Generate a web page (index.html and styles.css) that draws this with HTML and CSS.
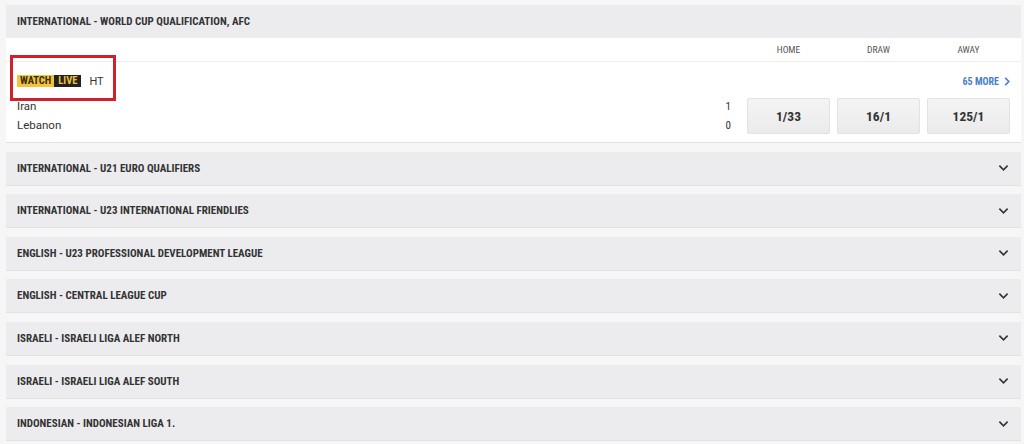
FILE: index.html
```html
<!DOCTYPE html>
<html>
<head>
    <title>Football coupon</title>
    <link rel="stylesheet" href="styles.css">
</head>
<body>
    <div class="coupon">
        <!-- Open competition with live match -->
        <div class="league open">
            <div class="league-head">INTERNATIONAL - WORLD CUP QUALIFICATION, AFC</div>
            <div class="league-body">
                <div class="market-head">
                    <span class="col">HOME</span>
                    <span class="col">DRAW</span>
                    <span class="col">AWAY</span>
                </div>
                <div class="event">
                    <div class="event-top">
                        <div class="status">
                            <span class="watch">WATCH</span><span class="live">LIVE</span>
                            <span class="period">HT</span>
                        </div>
                        <a class="more">65 MORE <svg class="more-arrow" viewBox="0 0 6 10"><path d="M1 1 L5 5 L1 9"/></svg></a>
                    </div>
                    <div class="event-main">
                        <div class="teams">
                            <div>Iran</div>
                            <div>Lebanon</div>
                        </div>
                        <div class="scores">
                            <div>1</div>
                            <div>0</div>
                        </div>
                        <div class="odds">
                            <button class="price">1/33</button>
                            <button class="price">16/1</button>
                            <button class="price">125/1</button>
                        </div>
                    </div>
                </div>
                <div class="highlight"></div>
            </div>
        </div>

        <!-- Collapsed competitions -->
        <div class="league"><div class="league-head">INTERNATIONAL - U21 EURO QUALIFIERS<svg class="chev" viewBox="0 0 12 8"><path d="M1.5 1.5 L6 6 L10.5 1.5"/></svg></div></div>
        <div class="league"><div class="league-head">INTERNATIONAL - U23 INTERNATIONAL FRIENDLIES<svg class="chev" viewBox="0 0 12 8"><path d="M1.5 1.5 L6 6 L10.5 1.5"/></svg></div></div>
        <div class="league"><div class="league-head">ENGLISH - U23 PROFESSIONAL DEVELOPMENT LEAGUE<svg class="chev" viewBox="0 0 12 8"><path d="M1.5 1.5 L6 6 L10.5 1.5"/></svg></div></div>
        <div class="league"><div class="league-head">ENGLISH - CENTRAL LEAGUE CUP<svg class="chev" viewBox="0 0 12 8"><path d="M1.5 1.5 L6 6 L10.5 1.5"/></svg></div></div>
        <div class="league"><div class="league-head">ISRAELI - ISRAELI LIGA ALEF NORTH<svg class="chev" viewBox="0 0 12 8"><path d="M1.5 1.5 L6 6 L10.5 1.5"/></svg></div></div>
        <div class="league"><div class="league-head">ISRAELI - ISRAELI LIGA ALEF SOUTH<svg class="chev" viewBox="0 0 12 8"><path d="M1.5 1.5 L6 6 L10.5 1.5"/></svg></div></div>
        <div class="league"><div class="league-head">INDONESIAN - INDONESIAN LIGA 1.<svg class="chev" viewBox="0 0 12 8"><path d="M1.5 1.5 L6 6 L10.5 1.5"/></svg></div></div>
    </div>
</body>
</html>
```
FILE: styles.css
```css
/* Page */
body {
    margin: 0;
    background-color: #f6f6f7;
    font-family: "Roboto Condensed", "Liberation Sans Narrow", "DejaVu Sans Condensed", Roboto, sans-serif;
    color: #333;
}

.coupon {
    display: flex;
    flex-direction: column;
    gap: 8.6px;
    padding: 5px 3px 0 6px;
}

/* League blocks */
.league {
    border-bottom: 1px solid #e2e2e4;
}

.league-head {
    display: flex;
    align-items: center;
    justify-content: space-between;
    height: 33px;
    padding: 0 12px 0 11px;
    background-color: #ececef;
    font-size: 11px;
    font-weight: bold;
    color: #333;
}

.chev {
    width: 11px;
    height: 8px;
    fill: none;
    stroke: #333;
    stroke-width: 1.8;
}

.league-body {
    position: relative;
    background-color: #fff;
    height: 104px;
}

/* HOME / DRAW / AWAY */
.market-head {
    display: flex;
    justify-content: flex-end;
    gap: 7px;
    height: 23px;
    padding: 0 11px;
    border-bottom: 1px solid #eeeeee;
    font-size: 9.5px;
    color: #555;
}

.market-head .col {
    width: 83px;
    text-align: center;
    line-height: 23px;
}

/* Event row */
.event {
    padding: 12px 11px 0 11px;
}

.event-top {
    display: flex;
    justify-content: space-between;
    align-items: center;
    height: 14px;
}

.status {
    display: flex;
    align-items: center;
    font-size: 10.5px;
    font-weight: bold;
}

.watch {
    background-color: #f3c33e;
    color: #3a2e0a;
    padding: 0 3px 0 3px;
    line-height: 12px;
}

.live {
    background-color: #23221f;
    color: #f3c33e;
    padding: 0 4px;
    line-height: 12px;
}

.period {
    margin-left: 8px;
    font-family: Roboto, sans-serif;
    font-size: 11px;
    font-weight: normal;
    color: #333;
}

.more {
    display: flex;
    align-items: center;
    gap: 5px;
    font-size: 10px;
    font-weight: bold;
    color: #4c7fc4;
    cursor: pointer;
}

.more-arrow {
    width: 6px;
    height: 9px;
    fill: none;
    stroke: #4c7fc4;
    stroke-width: 1.8;
}

.event-main {
    display: flex;
    align-items: center;
    margin-top: 9px;
}

.teams {
    flex: 1;
    font-family: Roboto, sans-serif;
    font-size: 11.5px;
    line-height: 19px;
    color: #333;
}

.scores {
    width: 20px;
    margin-right: 16px;
    text-align: right;
    font-size: 11px;
    line-height: 19px;
}

.odds {
    display: flex;
    gap: 7px;
}

.price {
    width: 83px;
    height: 36px;
    border: 1px solid #e2e2e2;
    border-radius: 2px;
    background: linear-gradient(#f4f4f4, #ebebeb);
    font-family: "Roboto Condensed", "Liberation Sans Narrow", "DejaVu Sans Condensed", Roboto, sans-serif;
    font-size: 13.5px;
    font-weight: bold;
    color: #333;
    cursor: pointer;
}

/* Red highlight box drawn over the live badge */
.highlight {
    position: absolute;
    left: 4px;
    top: 17px;
    width: 100px;
    height: 40px;
    border: 3px solid #d0202e;
}
```
